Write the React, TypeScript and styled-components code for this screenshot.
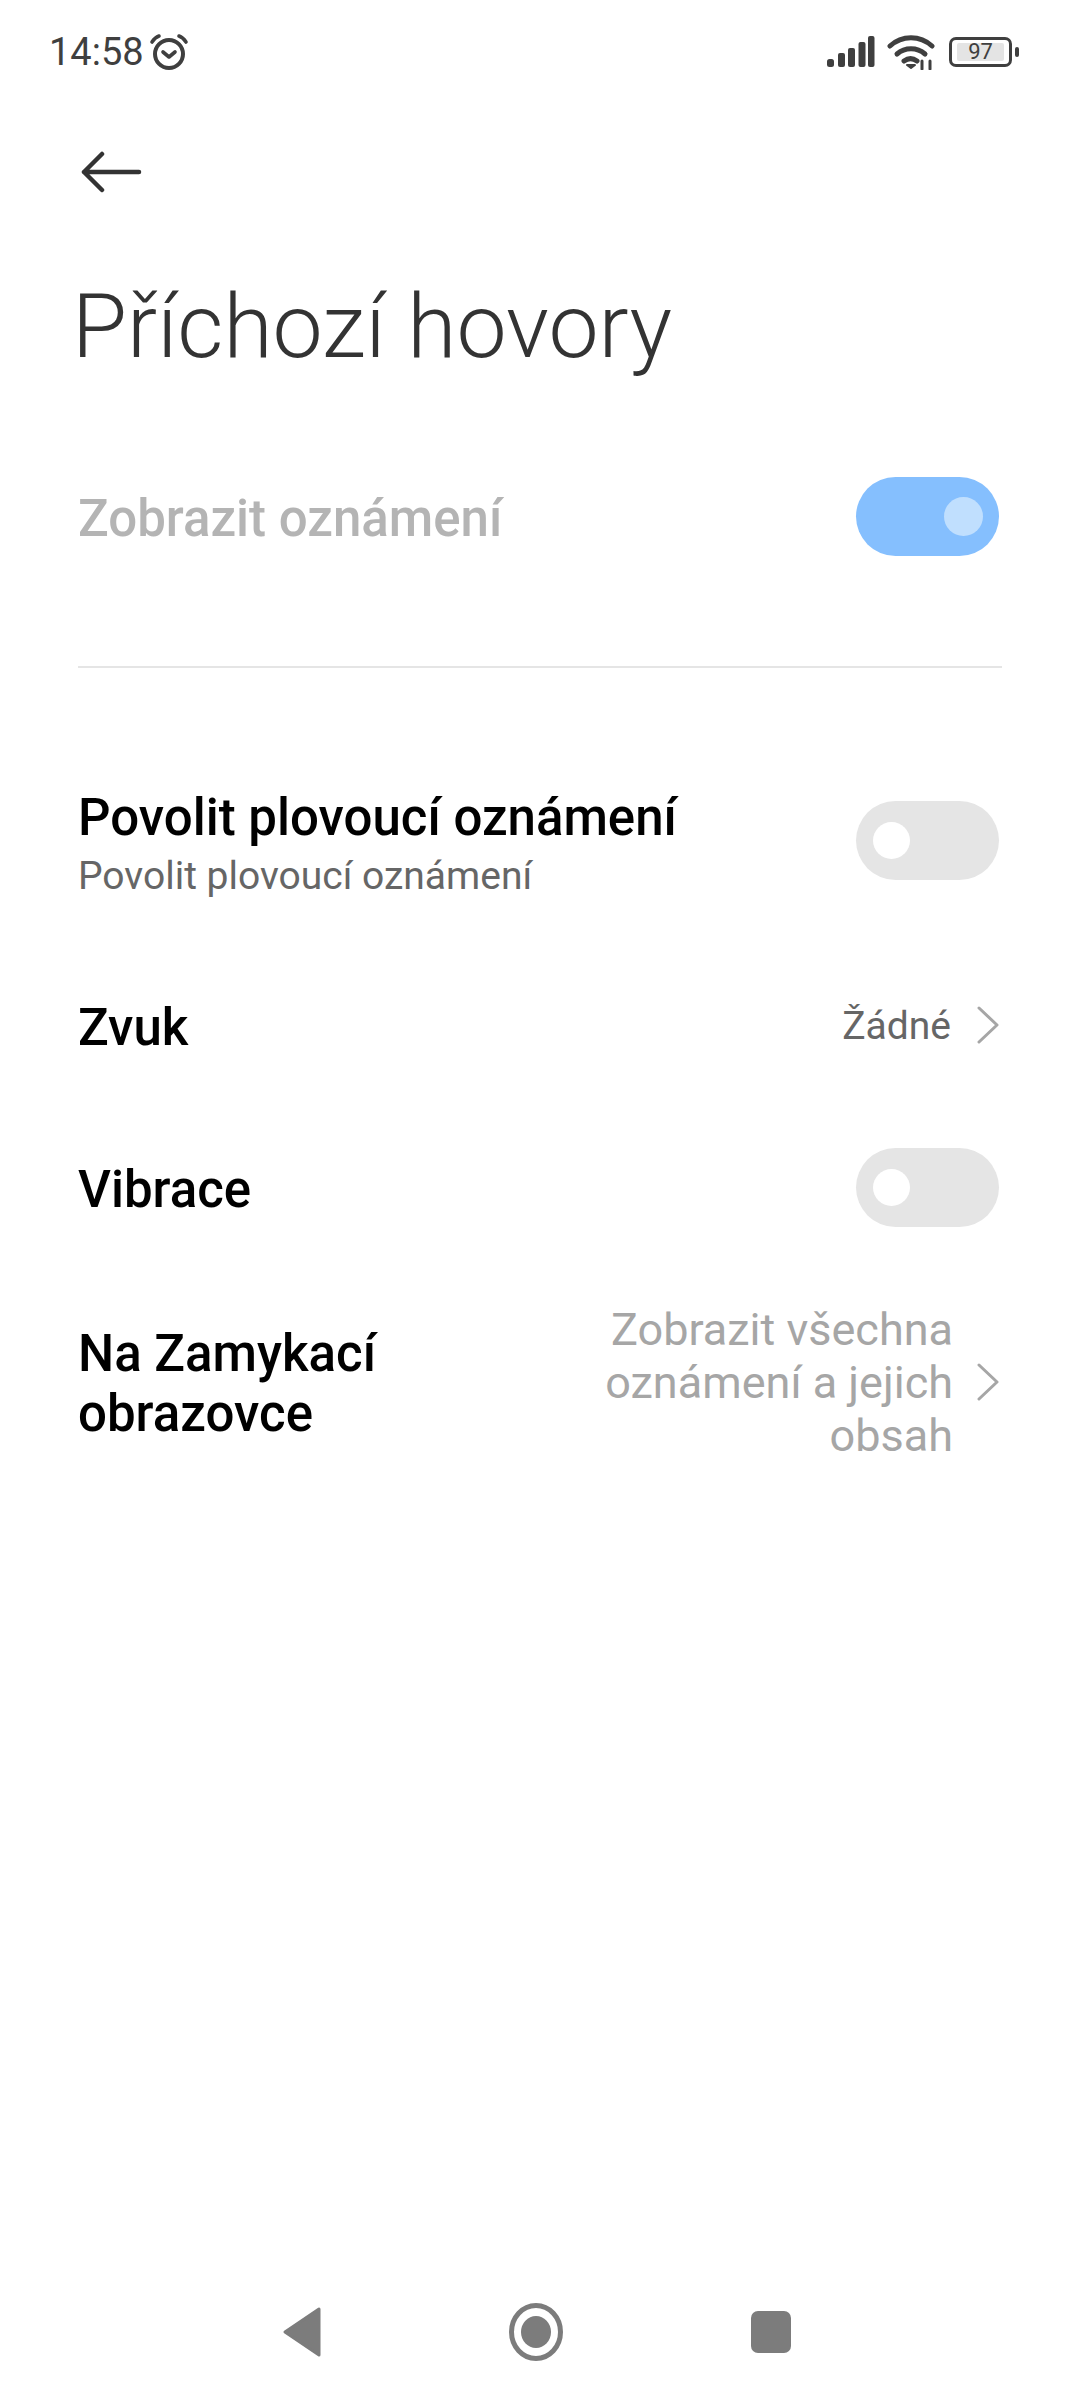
import styled, { createGlobalStyle } from 'styled-components';

const GlobalStyle = createGlobalStyle`
  html, body {
    margin: 0;
    padding: 0;
    background: #fff;
  }
  * {
    box-sizing: border-box;
  }
`;

const App = () => {
  return (
    <Screen>
      <GlobalStyle />
      <StatusBar>
        <StatusLeft>
          <Clock>14:58</Clock>
          <svg width="40" height="38" viewBox="0 0 40 38" fill="none" stroke="#3f3f3f" strokeLinecap="round">
            <circle cx="20" cy="21" r="14" strokeWidth="4" />
            <path d="M14 19l6 5 6-5" strokeWidth="3.6" strokeLinejoin="round" />
            <path d="M3 9c2-3 4-5 7-6M37 9c-2-3-4-5-7-6" strokeWidth="3.6" />
          </svg>
        </StatusLeft>
        <StatusRight>
          <svg width="48" height="32" viewBox="0 0 48 32" fill="#3f3f3f">
            <rect x="0" y="23" width="7" height="8" rx="2.5" />
            <rect x="11" y="17" width="7" height="14" rx="2" />
            <rect x="21" y="12" width="7" height="19" rx="2" />
            <rect x="31.500" y="6" width="7" height="25" rx="2" />
            <rect x="41" y="0" width="6.500" height="31" rx="2" />
          </svg>
          <svg width="48" height="36" viewBox="0 0 48 36" fill="none" stroke="#3f3f3f" strokeWidth="5" strokeLinecap="round">
            <path d="M3 12c12-11 30-11 42 0" />
            <path d="M10 20c8-7 20-7 28 0" />
            <path d="M17 27c4-3 9-3 13 0" />
            <path d="M20 31l4 3 4-3z" fill="#3f3f3f" strokeWidth="2" strokeLinejoin="round" />
            <path d="M35 27v8M43 27v8" strokeWidth="3" />
          </svg>
          <Battery>
            <BatteryShell>
              <BatteryFill>97</BatteryFill>
            </BatteryShell>
            <BatteryTip />
          </Battery>
        </StatusRight>
      </StatusBar>

      <BackButton>
        <svg width="62" height="42" viewBox="0 0 62 42" fill="none" stroke="#333" strokeWidth="4.500" strokeLinecap="round" strokeLinejoin="round">
          <path d="M3 21h55M21 3L3 21l18 18" />
        </svg>
      </BackButton>

      <Title>Příchozí hovory</Title>

      <TopRow>
        <DisabledLabel>Zobrazit oznámení</DisabledLabel>
        <Switch $on>
          <Knob $on />
        </Switch>
      </TopRow>
      <Divider />

      <Row $height={210} $top={67}>
        <RowText>
          <RowLabel>Povolit plovoucí oznámení</RowLabel>
          <RowSub>Povolit plovoucí oznámení</RowSub>
        </RowText>
        <Switch>
          <Knob />
        </Switch>
      </Row>
      <Row $height={160}>
        <RowLabel>Zvuk</RowLabel>
        <RowValue>
          <ValueText>Žádné</ValueText>
          <Chevron />
        </RowValue>
      </Row>
      <Row $height={164}>
        <RowLabel>Vibrace</RowLabel>
        <Switch>
          <Knob />
        </Switch>
      </Row>
      <Row $height={226}>
        <WrappedLabel>Na Zamykací obrazovce</WrappedLabel>
        <RowValue>
          <LongValue>Zobrazit všechna oznámení a jejich obsah</LongValue>
          <Chevron />
        </RowValue>
      </Row>

      <NavBar>
        <svg width="38" height="50" viewBox="0 0 38 50" fill="#7c7c7c" stroke="#7c7c7c" strokeWidth="3" strokeLinejoin="round">
          <path d="M2 25L36 2v46z" />
        </svg>
        <svg width="54" height="58" viewBox="0 0 54 58" fill="none" stroke="#7c7c7c">
          <ellipse cx="27" cy="29" rx="24.500" ry="26.500" strokeWidth="5" />
          <ellipse cx="27" cy="29" rx="15" ry="16" fill="#7c7c7c" strokeWidth="0" />
        </svg>
        <NavSquare />
      </NavBar>
    </Screen>
  );
};

const Chevron = () => (
  <svg width="26" height="38" viewBox="0 0 26 38" fill="none" stroke="#a6a6a6" strokeWidth="3" strokeLinecap="round" strokeLinejoin="round">
    <path d="M4 2l18 17L4 36" />
  </svg>
);

const Screen = styled.div`
  display: flex;
  flex-direction: column;
  width: 1080px;
  height: 2400px;
  background: #fff;
  font-family: Roboto, 'Liberation Sans', sans-serif;
`;

const StatusBar = styled.div`
  display: flex;
  justify-content: space-between;
  align-items: center;
  height: 48px;
  margin-top: 28px;
  padding: 0 61px 0 49px;
`;

const StatusLeft = styled.div`
  display: flex;
  align-items: center;
  gap: 5px;
`;

const Clock = styled.span`
  font-size: 38px;
  color: #3f3f3f;
`;

const StatusRight = styled.div`
  display: flex;
  align-items: center;
  gap: 12px;
`;

const Battery = styled.div`
  display: flex;
  align-items: center;
  gap: 3px;
  margin-left: 2px;
`;

const BatteryShell = styled.div`
  display: flex;
  width: 63px;
  height: 30px;
  padding: 3px 5px;
  border: 3px solid #3f3f3f;
  border-radius: 7px;
`;

const BatteryFill = styled.div`
  flex: 1;
  background: #e4e4e4;
  border-radius: 2px;
  color: #3f3f3f;
  font-size: 22px;
  line-height: 18px;
  text-align: center;
`;

const BatteryTip = styled.div`
  width: 4px;
  height: 10px;
  background: #3f3f3f;
  border-radius: 2px;
`;

const BackButton = styled.div`
  display: flex;
  height: 42px;
  margin-top: 75px;
  padding-left: 81px;
`;

const Title = styled.h1`
  margin: 79px 0 0;
  padding-left: 72px;
  font-size: 89.500px;
  font-weight: 300;
  line-height: 110px;
  color: #333;
`;

const TopRow = styled.div`
  display: flex;
  justify-content: space-between;
  align-items: center;
  height: 80px;
  margin-top: 94px;
  padding: 0 81px 0 78px;
`;

const DisabledLabel = styled.span`
  padding-top: 4px;
  font-size: 51px;
  font-weight: 500;
  color: #b4b4b4;
`;

const Switch = styled.div<{ $on?: boolean }>`
  display: flex;
  align-items: center;
  justify-content: ${(p) => (p.$on ? 'flex-end' : 'flex-start')};
  flex-shrink: 0;
  width: 143px;
  height: 79px;
  padding: 0 ${(p) => (p.$on ? '16px' : '17px')};
  background: ${(p) => (p.$on ? '#85bffe' : '#e5e5e5')};
  border-radius: 40px;
`;

const Knob = styled.div<{ $on?: boolean }>`
  width: ${(p) => (p.$on ? '39px' : '37px')};
  height: ${(p) => (p.$on ? '39px' : '37px')};
  background: ${(p) => (p.$on ? '#c0dffe' : '#fff')};
  border-radius: 50%;
`;

const Divider = styled.div`
  height: 2px;
  margin: 110px 78px 0;
  background: #e5e5e5;
`;

const Row = styled.div<{ $height: number; $top?: number }>`
  display: flex;
  justify-content: space-between;
  align-items: center;
  height: ${(p) => p.$height}px;
  margin-top: ${(p) => p.$top ?? 0}px;
  padding: 0 81px 0 78px;
`;

const RowText = styled.div`
  display: flex;
  flex-direction: column;
  padding-top: 6px;
`;

const RowLabel = styled.span`
  padding-top: 6px;
  font-size: 51px;
  font-weight: 500;
  line-height: 60px;
  color: #000;
`;

const WrappedLabel = styled(RowLabel)`
  width: 360px;
  padding-top: 4px;
`;

const RowSub = styled.span`
  font-size: 39px;
  line-height: 56px;
  color: #666;
`;

const RowValue = styled.div`
  display: flex;
  align-items: center;
  gap: 22px;
  margin-right: -2px;
`;

const ValueText = styled.span`
  margin-right: 2px;
  padding-top: 2px;
  font-size: 39px;
  color: #666;
`;

const LongValue = styled.span`
  width: 370px;
  font-size: 45px;
  line-height: 53px;
  text-align: right;
  color: #a6a6a6;
`;

const NavBar = styled.div`
  display: flex;
  justify-content: center;
  align-items: center;
  gap: 188px;
  margin-top: auto;
  margin-bottom: 39px;
  padding-right: 7px;
`;

const NavSquare = styled.div`
  width: 40px;
  height: 42px;
  background: #7c7c7c;
  border-radius: 7px;
`;

export default App;
